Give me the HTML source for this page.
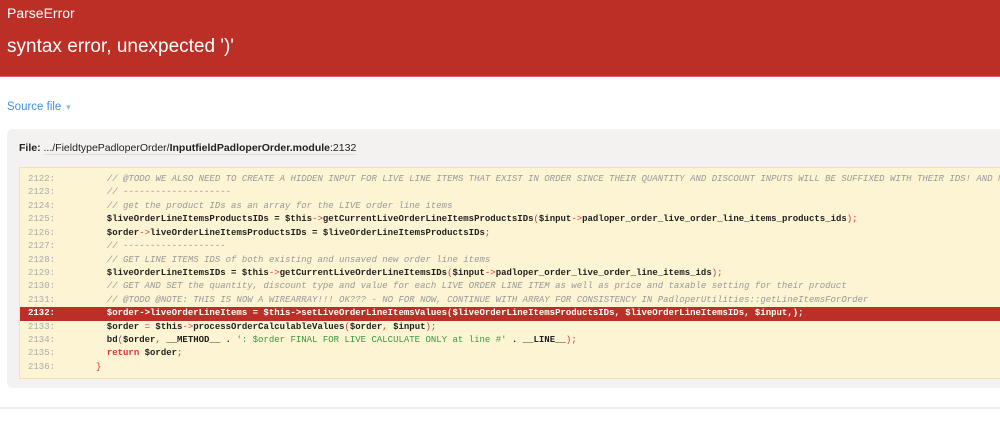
<!DOCTYPE html>
<html><head><meta charset="utf-8"><style>
body{margin:0;width:1000px;height:421px;overflow:hidden;background:#fff;font-family:"Liberation Sans",sans-serif;position:relative}
#hdr{position:absolute;left:0;top:0;width:1000px;height:76px;background:#bb2f27;color:#fff;border-bottom:1px solid #d66}
#h1{position:absolute;left:7px;top:5px;font-size:14px}
#h2{position:absolute;left:7px;top:36px;font-size:19px}
#src{position:absolute;left:7px;top:101px;font-size:11.5px;color:#3f8fd9}
#src span{font-size:8px;color:#9bbde0}
#panel{position:absolute;left:7px;top:129px;width:1000px;height:259px;background:#f3f2f0;border-radius:6px}
#file{position:absolute;left:19px;top:142px;font-size:10.5px;color:#222}
#file i{font-style:normal;border-bottom:1px solid #ddd}
#code{position:absolute;left:19px;top:167px;width:990px;height:210px;background:#fdf4d3;border:1px solid #f0e2b6}
#pre{margin:0;position:absolute;left:0;top:5px;font-family:"Liberation Mono",monospace;font-size:9px;line-height:13.43px;color:#222;font-weight:bold}
#pre div{height:13.43px;white-space:pre;padding-left:8px;width:980px}
.n{color:#aaa;font-weight:normal;display:inline-block;width:68px}
.c{color:#999;font-style:italic;font-weight:normal}
.o{color:#d33;font-weight:normal}
.s{color:#3a9a3a;font-weight:normal}
.k{color:#d33}
.hl{background:#bb2f27;color:#fff}
.hl .n{color:#fff;font-weight:bold}
#line{position:absolute;left:0;top:407px;width:1000px;height:2px;background:#f0f0f0}
</style></head><body>
<div id="hdr"><div id="h1">ParseError</div><div id="h2">syntax error, unexpected ')'</div></div>
<div id="src">Source file <span>▼</span></div>
<div id="panel"></div>
<div id="file"><b>File:</b> <i>.../FieldtypePadloperOrder/<b>InputfieldPadloperOrder.module</b>:2132</i></div>
<div id="code"><div id="pre"><div><span class="n">2122:</span>  <span class="c">// @TODO WE ALSO NEED TO CREATE A HIDDEN INPUT FOR LIVE LINE ITEMS THAT EXIST IN ORDER SINCE THEIR QUANTITY AND DISCOUNT INPUTS WILL BE SUFFIXED WITH THEIR IDS! AND NO</span></div><div><span class="n">2123:</span>  <span class="c">// --------------------</span></div><div><span class="n">2124:</span>  <span class="c">// get the product IDs as an array for the LIVE order line items</span></div><div><span class="n">2125:</span>  $liveOrderLineItemsProductsIDs = $this<span class="o">-&gt;</span>getCurrentLiveOrderLineItemsProductsIDs<span class="o">(</span>$input<span class="o">-&gt;</span>padloper_order_live_order_line_items_products_ids<span class="o">);</span></div><div><span class="n">2126:</span>  $order<span class="o">-&gt;</span>liveOrderLineItemsProductsIDs = $liveOrderLineItemsProductsIDs<span class="o">;</span></div><div><span class="n">2127:</span>  <span class="c">// -------------------</span></div><div><span class="n">2128:</span>  <span class="c">// GET LINE ITEMS IDS of both existing and unsaved new order line items</span></div><div><span class="n">2129:</span>  $liveOrderLineItemsIDs = $this<span class="o">-&gt;</span>getCurrentLiveOrderLineItemsIDs<span class="o">(</span>$input<span class="o">-&gt;</span>padloper_order_live_order_line_items_ids<span class="o">);</span></div><div><span class="n">2130:</span>  <span class="c">// GET AND SET the quantity, discount type and value for each LIVE ORDER LINE ITEM as well as price and taxable setting for their product</span></div><div><span class="n">2131:</span>  <span class="c">// @TODO @NOTE: THIS IS NOW A WIREARRAY!!! OK??? - NO FOR NOW, CONTINUE WITH ARRAY FOR CONSISTENCY IN PadloperUtilities::getLineItemsForOrder</span></div><div class="hl"><span class="n">2132:</span>  $order-&gt;liveOrderLineItems = $this-&gt;setLiveOrderLineItemsValues($liveOrderLineItemsProductsIDs, $liveOrderLineItemsIDs, $input,);</div><div><span class="n">2133:</span>  $order <span class="o">=</span> $this<span class="o">-&gt;</span>processOrderCalculableValues<span class="o">(</span>$order<span class="o">,</span> $input<span class="o">);</span></div><div><span class="n">2134:</span>  bd<span class="o">(</span>$order<span class="o">,</span> __METHOD__ . <span class="s">': $order FINAL FOR LIVE CALCULATE ONLY at line #'</span> . __LINE__<span class="o">);</span></div><div><span class="n">2135:</span>  <span class="k">return</span> $order<span class="o">;</span></div><div><span class="n">2136:</span><span class="o">}</span></div></div></div>
<div id="line"></div>
</body></html>
